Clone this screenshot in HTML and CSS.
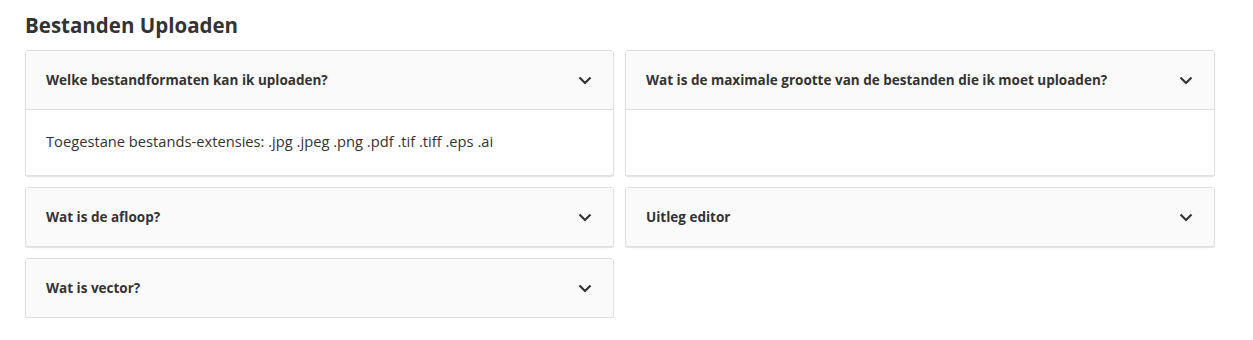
FILE: index.html
```html
<!DOCTYPE html>
<html lang="nl">
<head>
    <meta charset="UTF-8">
    <meta name="viewport" content="width=device-width, initial-scale=1.0">
    <title>Bestanden Uploaden</title>
    <link rel="stylesheet" href="styles.css">
</head>
<body>
    <div class="faq">
        <h2 class="faq-title">Bestanden Uploaden</h2>
        <div class="faq-grid">
            <div class="faq-item open">
                <div class="faq-head">
                    <span>Welke bestandformaten kan ik uploaden?</span>
                    <svg class="chevron" width="14" height="9" viewBox="0 0 14 9"><path d="M1.5 1.5 L7 7 L12.5 1.5" fill="none" stroke="#333" stroke-width="2.2"/></svg>
                </div>
                <div class="faq-body">Toegestane bestands-extensies: .jpg .jpeg .png .pdf .tif .tiff .eps .ai</div>
            </div>
            <div class="faq-item open">
                <div class="faq-head">
                    <span>Wat is de maximale grootte van de bestanden die ik moet uploaden?</span>
                    <svg class="chevron" width="14" height="9" viewBox="0 0 14 9"><path d="M1.5 1.5 L7 7 L12.5 1.5" fill="none" stroke="#333" stroke-width="2.2"/></svg>
                </div>
                <div class="faq-body"></div>
            </div>
            <div class="faq-item">
                <div class="faq-head">
                    <span>Wat is de afloop?</span>
                    <svg class="chevron" width="14" height="9" viewBox="0 0 14 9"><path d="M1.5 1.5 L7 7 L12.5 1.5" fill="none" stroke="#333" stroke-width="2.2"/></svg>
                </div>
            </div>
            <div class="faq-item">
                <div class="faq-head">
                    <span>Uitleg editor</span>
                    <svg class="chevron" width="14" height="9" viewBox="0 0 14 9"><path d="M1.5 1.5 L7 7 L12.5 1.5" fill="none" stroke="#333" stroke-width="2.2"/></svg>
                </div>
            </div>
            <div class="faq-item">
                <div class="faq-head">
                    <span>Wat is vector?</span>
                    <svg class="chevron" width="14" height="9" viewBox="0 0 14 9"><path d="M1.5 1.5 L7 7 L12.5 1.5" fill="none" stroke="#333" stroke-width="2.2"/></svg>
                </div>
            </div>
        </div>
    </div>
</body>
</html>
```

FILE: styles.css
```css
body {
    margin: 0;
    background-color: #fff;
    font-family: "Open Sans", Arial, sans-serif;
    color: #333;
}
.faq {
    width: 1190px;
    padding: 11px 0 0 25px;
}
.faq-title {
    margin: 0 0 11px 0;
    font-size: 20.5px;
    line-height: 28px;
    font-weight: 700;
    color: #333;
}
.faq-grid {
    display: grid;
    grid-template-columns: 589px 590px;
    column-gap: 11px;
    row-gap: 11px;
    align-items: start;
}
.faq-item {
    border: 1px solid #e0e0e0;
    border-radius: 3px;
    box-shadow: 0 1px 1px rgba(0, 0, 0, 0.12);
    background-color: #fff;
    overflow: hidden;
}
.faq-item.open {
    align-self: stretch;
    display: flex;
    flex-direction: column;
}
.faq-head {
    display: flex;
    justify-content: space-between;
    align-items: center;
    height: 58px;
    padding: 0 21px 0 20px;
    background-color: #fafafa;
    font-size: 13.5px;
    font-weight: 700;
}
.faq-item.open .faq-head {
    border-bottom: 1px solid #ddd;
}
.faq-body {
    flex: 1;
    padding: 21px 20px 24px;
    font-size: 14.7px;
    line-height: 20px;
}
```
